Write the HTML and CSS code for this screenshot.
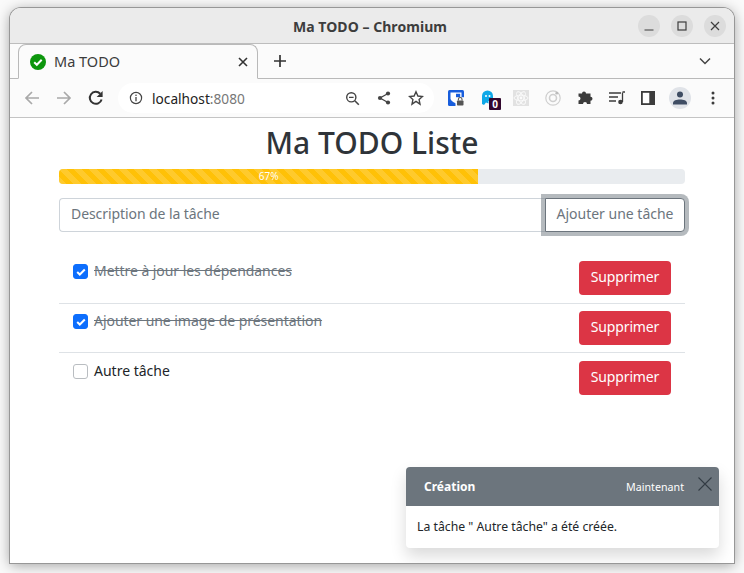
FILE: index.html
```html
<!DOCTYPE html>
<html lang="fr">
<head>
<meta charset="utf-8">
<title>Ma TODO</title>
<link rel="stylesheet" href="styles.css">
</head>
<body>
<div class="window">
  <header class="titlebar">
    <span class="title">Ma TODO – Chromium</span>
    <div class="wm">
      <span class="wm-btn"><svg width="12" height="12" viewBox="0 0 12 12"><path d="M1.500 10h9" stroke="#3d3d3d" stroke-width="1.200"/></svg></span>
      <span class="wm-btn"><svg width="12" height="12" viewBox="0 0 12 12"><rect x="2" y="2" width="8" height="8" fill="none" stroke="#3d3d3d" stroke-width="1.200"/></svg></span>
      <span class="wm-btn"><svg width="12" height="12" viewBox="0 0 12 12"><path d="M2 2l8 8M10 2l-8 8" stroke="#3d3d3d" stroke-width="1.200"/></svg></span>
    </div>
  </header>
  <div class="tabstrip">
    <div class="tab">
      <svg class="favicon" width="16" height="16" viewBox="0 0 16 16"><circle cx="8" cy="8" r="8" fill="#0d960d"/><path d="M4.200 8.300l2.600 2.500 4.900-5" fill="none" stroke="#fff" stroke-width="2"/></svg>
      <span class="tab-title">Ma TODO</span>
      <svg class="tab-close" width="10" height="10" viewBox="0 0 10 10"><path d="M1 1l8 8M9 1l-8 8" stroke="#333" stroke-width="1.600"/></svg>
    </div>
    <svg class="newtab" width="14" height="14" viewBox="0 0 14 14"><path d="M7 1v12M1 7h12" stroke="#333" stroke-width="1.700"/></svg>
    <svg class="tabmenu" width="12" height="8" viewBox="0 0 12 8"><path d="M1 1.500l5 5 5-5" fill="none" stroke="#444" stroke-width="1.500"/></svg>
  </div>
  <div class="toolbar">
    <svg class="nav" width="16" height="16" viewBox="0 0 16 16"><path d="M15 8H2M8 2L2 8l6 6" fill="none" stroke="#a9a9a9" stroke-width="1.700"/></svg>
    <svg class="nav" width="16" height="16" viewBox="0 0 16 16"><path d="M1 8h13M8 2l6 6-6 6" fill="none" stroke="#a9a9a9" stroke-width="1.700"/></svg>
    <svg class="nav" width="16" height="16" viewBox="0 0 16 16"><path d="M13.600 9.500A6 6 0 1 1 12.200 3.700" fill="none" stroke="#333" stroke-width="2"/><path d="M14.600 1v6h-6z" fill="#333"/></svg>
    <div class="omnibox">
      <svg width="14" height="14" viewBox="0 0 14 14"><circle cx="7" cy="7" r="5.600" fill="none" stroke="#444" stroke-width="1.200"/><path d="M7 6v4.200" stroke="#444" stroke-width="1.300"/><circle cx="7" cy="4.200" r=".8" fill="#444"/></svg>
      <span class="url">localhost<span class="port">:8080</span></span>
      <span class="omni-icons">
        <svg width="15" height="15" viewBox="0 0 15 15"><circle cx="6.300" cy="6.300" r="4.600" fill="none" stroke="#444" stroke-width="1.400"/><path d="M9.800 9.800l4 4" stroke="#444" stroke-width="1.600"/><path d="M4 6.300h4.600" stroke="#444" stroke-width="1.200"/></svg>
        <svg width="14" height="14" viewBox="0 0 14 14"><path d="M11 2.500L3 7l8 4.500" fill="none" stroke="#444" stroke-width="1.300"/><circle cx="11" cy="2.500" r="2.100" fill="#444"/><circle cx="3" cy="7" r="2.100" fill="#444"/><circle cx="11" cy="11.500" r="2.100" fill="#444"/></svg>
        <svg width="16" height="16" viewBox="0 0 16 16"><path d="M8 1.800l1.900 4.200 4.600.5-3.400 3.100.9 4.500L8 11.400l-4 2.700.9-4.500L1.500 6.500l4.600-.5z" fill="none" stroke="#444" stroke-width="1.400"/></svg>
      </span>
    </div>
    <div class="exts">
      <svg width="16" height="16" viewBox="0 0 16 16"><rect width="16" height="16" rx="1.500" fill="#175ddc"/><path d="M2.500 2.500h11v6q0 2.500-5.500 5Q2.500 11 2.500 8.500z" fill="#fff"/><path d="M8 3.800h4.200v4.700q0 1.500-4.200 3.500z" fill="#175ddc"/><rect x="7.500" y="7.200" width="8.500" height="8.800" fill="#fbfbfb"/><rect x="9" y="10.500" width="6.500" height="5" rx=".8" fill="#555"/><path d="M10.400 10.500V9.300a1.800 1.800 0 0 1 3.600 0v1.200" fill="none" stroke="#555" stroke-width="1.100"/></svg>
      <span class="ghost">
        <svg width="13" height="16" viewBox="0 0 13 16"><path d="M1 14V6a5.500 5.500 0 0 1 11 0v5H7.500v2.500L5 12.500 3 15z" fill="#0ea8e8"/><circle cx="5" cy="6" r="1" fill="#fff"/><circle cx="8.500" cy="6" r="1" fill="#fff"/></svg>
        <span class="badge">0</span>
      </span>
      <svg class="react" width="16" height="16" viewBox="0 0 16 16"><rect width="16" height="16" fill="#e2e2e2"/><g fill="none" stroke="#fbfbfb" stroke-width=".9"><ellipse cx="8" cy="8" rx="7" ry="2.800"/><ellipse cx="8" cy="8" rx="7" ry="2.800" transform="rotate(60 8 8)"/><ellipse cx="8" cy="8" rx="7" ry="2.800" transform="rotate(120 8 8)"/></g><circle cx="8" cy="8" r="1.400" fill="#fbfbfb"/></svg>
      <svg width="16" height="16" viewBox="0 0 16 16"><g fill="none" stroke="#cfcfcf"><circle cx="8" cy="8" r="7.200" stroke-width="1.200"/><circle cx="8" cy="8" r="3.500" stroke-width="1.600"/></g><circle cx="11.800" cy="3.200" r="1.400" fill="#bbb"/></svg>
      <svg width="16" height="16" viewBox="0 0 16 16"><path d="M1 5h3.500a2 2 0 1 1 4 0H13v3.200a2 2 0 1 1 0 4V15.500H9.500a2 2 0 1 0-4 0H1v-3.600a2 2 0 1 0 0-4z" fill="#3c3c3c" transform="translate(.5 -1.500)"/></svg>
      <svg width="16" height="14" viewBox="0 0 16 14"><path d="M0 2h12M0 6h9M0 10h7" stroke="#3c3c3c" stroke-width="1.300"/><path d="M13.500 1.500V11" stroke="#3c3c3c" stroke-width="1.300"/><path d="M13.500 1h2.500" stroke="#3c3c3c" stroke-width="1.300"/><circle cx="11.500" cy="11" r="2.300" fill="#3c3c3c"/></svg>
      <svg width="14" height="14" viewBox="0 0 14 14"><rect width="14" height="14" fill="#3c3c3c"/><rect x="1.800" y="1.800" width="6.500" height="10.400" fill="#fff"/></svg>
    </div>
    <span class="avatar"><svg width="14" height="14" viewBox="0 0 14 14"><circle cx="7" cy="3.600" r="3" fill="#3f4d63"/><path d="M0 13.500v-1.500c0-2.500 3.500-3.500 7-3.500s7 1 7 3.500v1.500z" fill="#3f4d63"/></svg></span>
    <svg class="kebab" width="4" height="14" viewBox="0 0 4 14"><circle cx="2" cy="2" r="1.500" fill="#3c3c3c"/><circle cx="2" cy="7" r="1.500" fill="#3c3c3c"/><circle cx="2" cy="12" r="1.500" fill="#3c3c3c"/></svg>
  </div>
  <main class="page">
    <div class="container">
      <h1 class="heading">Ma TODO Liste</h1>
      <div class="progress"><div class="progress-bar" style="width:67%">67%</div></div>
      <form class="input-group">
        <input class="form-control" type="text" placeholder="Description de la tâche">
        <button class="btn-add" type="button">Ajouter une tâche</button>
      </form>
      <ul class="list">
        <li class="item">
          <label class="check"><span class="box on"><svg width="10" height="8" viewBox="0 0 10 8"><path d="M1.200 4l2.600 2.500 5-5" fill="none" stroke="#fff" stroke-width="2"/></svg></span><span class="done">Mettre à jour les dépendances</span></label>
          <button class="btn-del" type="button">Supprimer</button>
        </li>
        <li class="item">
          <label class="check"><span class="box on"><svg width="10" height="8" viewBox="0 0 10 8"><path d="M1.200 4l2.600 2.500 5-5" fill="none" stroke="#fff" stroke-width="2"/></svg></span><span class="done">Ajouter une image de présentation</span></label>
          <button class="btn-del" type="button">Supprimer</button>
        </li>
        <li class="item">
          <label class="check"><span class="box"></span><span>Autre tâche</span></label>
          <button class="btn-del" type="button">Supprimer</button>
        </li>
      </ul>
    </div>
    <aside class="toast">
      <div class="toast-header">
        <strong class="toast-title">Création</strong>
        <small class="toast-time">Maintenant</small>
        <svg class="toast-close" width="14" height="14" viewBox="0 0 14 14"><path d="M.5.5l13 13M13.500.5l-13 13" stroke="#333c44" stroke-width="1.100"/></svg>
      </div>
      <div class="toast-body">La tâche " Autre tâche" a été créée.</div>
    </aside>
  </main>
</div>
</body>
</html>
```

FILE: styles.css
```css
* { box-sizing: border-box; }
html, body { height: 100%; }
body {
  margin: 0;
  padding: 8px 10px 10px;
  background: #fafafa;
  font-family: "Noto Sans", sans-serif;
  overflow: hidden;
}
.window {
  height: 555px;
  display: flex;
  flex-direction: column;
  border-radius: 11px 11px 0 0;
  box-shadow: 0 0 0 1px #979797, 0 2px 14px rgba(0,0,0,.38);
  overflow: hidden;
  background: #fff;
}
.titlebar {
  height: 36px;
  flex: none;
  background: #ebebeb;
  border-bottom: 1px solid #bdbdbd;
  display: flex;
  align-items: center;
  justify-content: center;
  position: relative;
}
.title { font-size: 14px; font-weight: 700; color: #3d3d3d; letter-spacing: .05px; margin: 2px 0 0 -4px; }
.wm { position: absolute; right: 8px; top: 7px; display: flex; gap: 11px; }
.wm-btn {
  width: 22px; height: 22px; border-radius: 50%;
  background: #dcdcdc;
  display: flex; align-items: center; justify-content: center;
}
.tabstrip {
  height: 35px;
  flex: none;
  background: #fbfbfb;
  border-bottom: 1px solid #b9b9b9;
  display: flex;
  align-items: center;
  padding-left: 8px;
  position: relative;
}
.tab {
  width: 240px;
  height: 35px;
  margin-top: 1px;
  background: #fbfbfb;
  border: 1px solid #b9b9b9;
  border-bottom-color: #fbfbfb;
  border-radius: 8px 8px 0 0;
  display: flex;
  align-items: center;
  padding: 0 9px 0 11px;
}
.favicon { flex: none; }
.tab-title { margin: 0 0 2px 8px; font-size: 14.500px; color: #3c3c3c; flex: 1; }
.newtab { margin-left: 15px; }
.tabmenu { margin-left: auto; margin-right: 23px; }
.toolbar {
  height: 39px;
  flex: none;
  background: #fbfbfb;
  border-bottom: 1px solid #c4c4c4;
  display: flex;
  align-items: center;
  padding-left: 14px;
}
.nav { margin-right: 16px; flex: none; }
.nav:nth-child(3) { margin-right: 14px; }
.omnibox {
  width: 316px;
  height: 30px;
  border-radius: 15px;
  background: #fff;
  display: flex;
  align-items: center;
  padding: 0 10px 0 11px;
}
.url { margin-left: 9px; font-size: 13.700px; color: #222; }
.port { color: #777; }
.omni-icons { margin-left: auto; display: flex; align-items: center; gap: 17px; }
.exts { margin-left: 14px; display: flex; align-items: center; gap: 16px; }
.ghost { position: relative; display: flex; width: 16px; height: 16px; margin-left: 1px; }
.badge {
  position: absolute; left: 8px; top: 8px;
  width: 12px; height: 12px;
  background: #32082e; color: #fff;
  font-size: 10px; font-weight: 700; line-height: 12px; text-align: center;
  border-radius: 1px;
}
.avatar {
  margin-left: 14px;
  width: 22px; height: 22px; border-radius: 50%;
  background: #e0e3e8;
  display: flex; align-items: center; justify-content: center;
}
.kebab { margin-left: 20px; }
.page { flex: 1; position: relative; background: #fff; padding: 0 49px; }
.container { display: flex; flex-direction: column; }
.heading {
  margin: 6px 0 0;
  text-align: center;
  font-size: 30px;
  line-height: 38px;
  font-weight: 500;
  color: #2f3439;
  height: 45px;
}
.progress {
  height: 15px;
  background: #e9ecef;
  border-radius: 4px;
  overflow: hidden;
  font-size: 10px;
}
.progress-bar {
  height: 100%;
  background-color: #ffc107;
  background-image: linear-gradient(45deg, rgba(255,255,255,.15) 25%, transparent 25%, transparent 50%, rgba(255,255,255,.15) 50%, rgba(255,255,255,.15) 75%, transparent 75%, transparent);
  background-size: 15px 15px;
  color: #fff;
  text-align: center;
  line-height: 15px;
}
.input-group { display: flex; margin-top: 14px; height: 34px; }
.form-control {
  flex: 1;
  min-width: 0;
  border: 1px solid #ced4da;
  border-right: 0;
  border-radius: 4px 0 0 4px;
  padding: 0 11px 3px;
  font: 14px "Noto Sans", sans-serif;
  letter-spacing: -.08px;
  background: #fff;
  outline: 0;
}
.form-control::placeholder { color: #6c757d; opacity: 1; }
.btn-add {
  width: 140px;
  border: 1px solid #6c757d;
  border-radius: 0 4px 4px 0;
  background: #fff;
  color: #6c757d;
  font: 14px "Noto Sans", sans-serif;
  padding: 0 0 3px;
  box-shadow: 0 0 0 4px rgba(108,117,125,.5);
  position: relative;
}
.list { list-style: none; margin: 21px 0 0; padding: 0; }
.item {
  height: 51px;
  padding: 8px 14px 0;
  display: flex;
  justify-content: space-between;
  align-items: flex-start;
  border-bottom: 1px solid #dee2e6;
}
.item:nth-child(2) { height: 49px; padding-top: 7px; }
.item:last-child { border-bottom: 0; }
.check { display: flex; align-items: flex-start; font-size: 14px; line-height: 20px; color: #212529; }
.box {
  width: 15px; height: 15px; margin: 3px 6px 0 0;
  border: 1px solid #b9bdc1;
  border-radius: 3px;
  background: #fff;
  display: flex; align-items: center; justify-content: center;
}
.box.on { background: #0d6efd; border-color: #0d6efd; }
.done { text-decoration: line-through; color: #6c757d; letter-spacing: -.05px; }
.btn-del {
  width: 92px;
  height: 34px;
  border: 0;
  border-radius: 4px;
  background: #dc3545;
  color: #fff;
  font: 14px "Noto Sans", sans-serif;
  letter-spacing: -.15px;
  padding: 0 0 3px;
}
.toast {
  position: absolute;
  right: 15px;
  bottom: 15px;
  width: 313px;
  background: #fff;
  border-radius: 4px;
  overflow: hidden;
  box-shadow: 0 8px 16px rgba(0,0,0,.15);
  color: #212529;
}
.toast-header {
  height: 39px;
  background: #6c757d;
  color: #fff;
  display: flex;
  align-items: center;
  padding: 0 7px 0 18px;
}
.toast-title { font-size: 12px; flex: 1; }
.toast-time { font-size: 10.700px; margin-right: 14px; }
.toast-close { margin-bottom: 6px; }
.toast-body { height: 42px; padding: 12px 11px 0; font-size: 12.250px; line-height: 18px; }
```
